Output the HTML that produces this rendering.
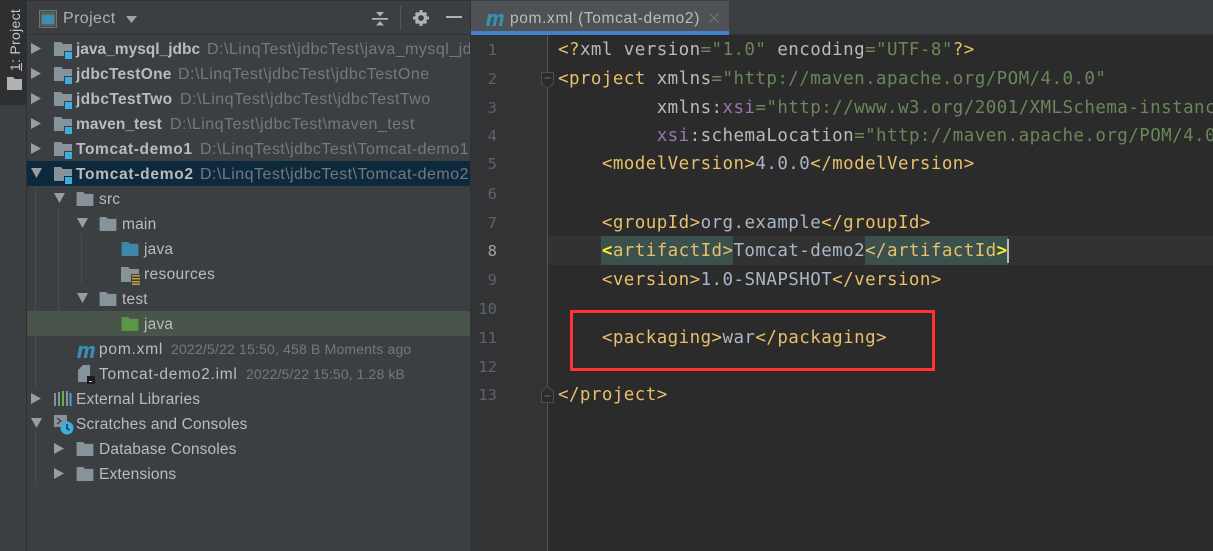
<!DOCTYPE html>
<html><head><meta charset="utf-8">
<style>
html,body{margin:0;padding:0;background:#2b2b2b}
#r{position:relative;width:1213px;height:551px;overflow:hidden;background:#2b2b2b;font-family:"Liberation Sans",sans-serif}
#r div,#r svg{position:absolute}
.t{font-size:15.5px;color:#bbb;white-space:nowrap;line-height:25px;height:25px;letter-spacing:.2px}
.b{font-weight:bold}
.p{color:#787878;font-size:16px;letter-spacing:.47px}
.d{color:#787878;font-size:14px}
.c{font-family:"DejaVu Sans Mono",monospace;font-size:17.5px;letter-spacing:.43px;white-space:pre;line-height:29px;height:29px;left:558px;color:#a9b7c6}
.n{font-family:"DejaVu Sans Mono",monospace;font-size:15.5px;color:#606366;text-align:right;width:40px;left:457px;line-height:29px;height:29px}
.g{color:#e8bf6a}.a{color:#bababa}.s{color:#6a8759}.x{color:#9876aa}.y{color:#ffef28;font-weight:bold}
</style></head><body>
<div id="r">
<svg width="0" height="0" style="position:absolute"><defs>
<symbol id="f" viewBox="0 0 18 15"><path d="M0 0h7l2 2h9v13H0z" fill="#87939a"/></symbol>
<symbol id="m" viewBox="0 0 20 16"><path d="M1 16 3.500 3h3.200l-.3 1.800C7.500 3.500 9 3 10.200 3c1.500 0 2.500.7 2.800 2 1.200-1.300 2.700-2 4-2 2.200 0 3.200 1.400 2.800 3.500L18 16h-3.400l1.700-8.700c.2-1-.2-1.500-1-1.500-.8 0-1.600.5-2.200 1.200L11.400 16H8l1.700-8.700c.2-1-.2-1.500-1-1.500-.8 0-1.600.5-2.200 1.200L4.500 16z" fill="#3a8fb7"/></symbol>
</defs></svg>

<!-- left strip -->
<div style="left:0;top:0;width:27px;height:551px;background:#3c3f41"></div>
<div style="left:0;top:0;width:26px;height:105px;background:#2d2f30"></div>
<div style="left:26px;top:0;width:1px;height:551px;background:#2d2f30"></div>
<div style="left:-25px;top:30px;width:80px;height:20px;line-height:20px;font-size:14px;color:#c4c4c4;transform:rotate(-90deg);text-align:center;white-space:nowrap;letter-spacing:.3px"><u>1</u>: Project</div>
<svg style="left:7px;top:77px" width="15" height="13" viewBox="0 0 15 13"><path d="M0 0h6l2 2h7v11H0z" fill="#afb1b3"/></svg>

<!-- project panel -->
<div style="left:27px;top:0;width:443px;height:551px;background:#3c3f41;overflow:hidden"></div>
<div style="left:27px;top:0;width:443px;height:1px;background:#323232"></div>
<div style="left:27px;top:34px;width:443px;height:1px;background:#323232"></div>
<svg style="left:39px;top:10px" width="18" height="18" viewBox="0 0 18 18"><rect x=".5" y=".5" width="17" height="17" fill="#3c3f41" stroke="#6e7375"/><rect x="1.500" y="1.500" width="15" height="15" fill="#5a6062"/><rect x="3" y="5" width="12" height="9" fill="#3f8db0"/></svg>
<div class="t" style="left:63px;top:6px;font-size:16px;color:#aeb0b2;letter-spacing:.4px">Project</div>
<svg style="left:126px;top:16px" width="11" height="7"><path d="M0 0h11L5.500 7z" fill="#a0a2a4"/></svg>
<svg style="left:372px;top:10px" width="16" height="17" viewBox="0 0 16 17"><path d="M0 8h16v1.800H0zM4 2h8L8 6.500zM8 11l4 4.500H4z" fill="#afb1b3"/></svg>
<div style="left:400px;top:6px;width:1px;height:24px;background:#515658"></div>
<svg style="left:413px;top:10px" width="16" height="16" viewBox="0 0 16 16"><circle cx="8" cy="8" r="4.500" fill="none" stroke="#afb1b3" stroke-width="3.200"/><path d="M6.500 0h3v3h-3zM6.500 13h3v3h-3zM0 6.500h3v3H0zM13 6.500h3v3h-3zM1.800 3.800l2-2 2 2-2 2zM10.200 3.800l2-2 2 2-2 2zM1.800 12.200l2-2 2 2-2 2zM10.200 12.200l2-2 2 2-2 2z" fill="#afb1b3"/></svg>
<div style="left:446px;top:16px;width:16px;height:2px;background:#afb1b3"></div>

<!-- row bg -->
<div style="left:27px;top:161px;width:443px;height:25px;background:#0d293e"></div>
<div style="left:27px;top:311px;width:443px;height:25px;background:#49544a"></div>

<!-- guides -->
<div style="left:35px;top:186px;width:1px;height:201px;background:#4a4d4f"></div>
<div style="left:58px;top:208px;width:1px;height:128px;background:#4a4d4f"></div>
<div style="left:81px;top:233px;width:1px;height:52px;background:#4a4d4f"></div>
<div style="left:81px;top:308px;width:1px;height:28px;background:#4a4d4f"></div>
<div style="left:35px;top:432px;width:1px;height:54px;background:#4a4d4f"></div>

<!-- arrows collapsed -->
<svg style="left:31px;top:43px" width="11" height="11"><path d="M0 0l10 5.500L0 11z" fill="#9a9c9e"/></svg>
<svg style="left:31px;top:68px" width="11" height="11"><path d="M0 0l10 5.500L0 11z" fill="#9a9c9e"/></svg>
<svg style="left:31px;top:93px" width="11" height="11"><path d="M0 0l10 5.500L0 11z" fill="#9a9c9e"/></svg>
<svg style="left:31px;top:118px" width="11" height="11"><path d="M0 0l10 5.500L0 11z" fill="#9a9c9e"/></svg>
<svg style="left:31px;top:143px" width="11" height="11"><path d="M0 0l10 5.500L0 11z" fill="#9a9c9e"/></svg>
<svg style="left:31px;top:393px" width="11" height="11"><path d="M0 0l10 5.500L0 11z" fill="#9a9c9e"/></svg>
<svg style="left:54px;top:443px" width="11" height="11"><path d="M0 0l10 5.500L0 11z" fill="#9a9c9e"/></svg>
<svg style="left:54px;top:468px" width="11" height="11"><path d="M0 0l10 5.500L0 11z" fill="#9a9c9e"/></svg>
<!-- arrows expanded -->
<svg style="left:31px;top:168px" width="12" height="10"><path d="M0 0h11L5.500 10z" fill="#9a9c9e"/></svg>
<svg style="left:54px;top:193px" width="12" height="10"><path d="M0 0h11L5.500 10z" fill="#9a9c9e"/></svg>
<svg style="left:77px;top:218px" width="12" height="10"><path d="M0 0h11L5.500 10z" fill="#9a9c9e"/></svg>
<svg style="left:77px;top:293px" width="12" height="10"><path d="M0 0h11L5.500 10z" fill="#9a9c9e"/></svg>
<svg style="left:31px;top:418px" width="12" height="10"><path d="M0 0h11L5.500 10z" fill="#9a9c9e"/></svg>

<!-- module folders -->
<svg style="left:54px;top:42px" width="20" height="18" viewBox="0 0 20 18"><path d="M0 0h7l2 2h9v12H0z" fill="#87939a"/><rect x="10.500" y="9.500" width="8" height="8" fill="#3caee0" stroke="#3c3f41"/></svg>
<svg style="left:54px;top:67px" width="20" height="18" viewBox="0 0 20 18"><path d="M0 0h7l2 2h9v12H0z" fill="#87939a"/><rect x="10.500" y="9.500" width="8" height="8" fill="#3caee0" stroke="#3c3f41"/></svg>
<svg style="left:54px;top:92px" width="20" height="18" viewBox="0 0 20 18"><path d="M0 0h7l2 2h9v12H0z" fill="#87939a"/><rect x="10.500" y="9.500" width="8" height="8" fill="#3caee0" stroke="#3c3f41"/></svg>
<svg style="left:54px;top:117px" width="20" height="18" viewBox="0 0 20 18"><path d="M0 0h7l2 2h9v12H0z" fill="#87939a"/><rect x="10.500" y="9.500" width="8" height="8" fill="#3caee0" stroke="#3c3f41"/></svg>
<svg style="left:54px;top:142px" width="20" height="18" viewBox="0 0 20 18"><path d="M0 0h7l2 2h9v12H0z" fill="#87939a"/><rect x="10.500" y="9.500" width="8" height="8" fill="#3caee0" stroke="#3c3f41"/></svg>
<svg style="left:54px;top:167px" width="20" height="18" viewBox="0 0 20 18"><path d="M0 0h7l2 2h9v12H0z" fill="#87939a"/><rect x="10.500" y="9.500" width="8" height="8" fill="#3caee0" stroke="#0d293e"/></svg>

<!-- plain folders -->
<svg style="left:76px;top:192px" width="18" height="14"><use href="#f"/></svg>
<svg style="left:99px;top:217px" width="18" height="14"><use href="#f"/></svg>
<svg style="left:99px;top:292px" width="18" height="14"><use href="#f"/></svg>
<svg style="left:121px;top:242px" width="18" height="14" viewBox="0 0 18 15"><path d="M0 0h7l2 2h9v13H0z" fill="#3f87a8"/></svg>
<svg style="left:121px;top:267px" width="20" height="18" viewBox="0 0 20 18"><path d="M0 0h7l2 2h9v13H0z" fill="#87939a"/><rect x="10" y="7" width="10" height="11" fill="#3c3f41"/><path d="M11 8h8v1.500h-8zM11 11h8v1.500h-8zM11 14h8v1.500h-8zM11 16.500h8V18h-8z" fill="#c79a3b"/></svg>
<svg style="left:121px;top:317px" width="18" height="14" viewBox="0 0 18 15"><path d="M0 0h7l2 2h9v13H0z" fill="#5a9647"/></svg>
<svg style="left:76px;top:442px" width="18" height="14"><use href="#f"/></svg>
<svg style="left:76px;top:467px" width="18" height="14"><use href="#f"/></svg>

<!-- file icons -->
<svg style="left:76px;top:343px" width="19" height="15"><use href="#m"/></svg>
<svg style="left:78px;top:365px" width="18" height="20" viewBox="0 0 18 20"><path d="M0 5l5-5h7v17H0z" fill="#87939a"/><rect x="9" y="11" width="8" height="8" fill="#1d1d1d"/><rect x="11" y="16" width="3" height="1" fill="#ccc"/></svg>
<svg style="left:54px;top:391px" width="18" height="16" viewBox="0 0 18 16"><path d="M0 2h2v13H0zM4 1h2v14H4zM12 0h2v15h-2z" fill="#87939a"/><path d="M8 0h2v15H8z" fill="#62b543"/><path d="M15.500 2h2v13h-2z" fill="#40a4d8"/></svg>
<svg style="left:54px;top:415px" width="20" height="20" viewBox="0 0 20 20"><path d="M0 0h13v12H0z" fill="#87939a"/><path d="M3 3l4 3-4 3" fill="none" stroke="#3c3f41" stroke-width="1.300"/><circle cx="13" cy="13" r="6.500" fill="#3caee0"/><path d="M13 9v4.500l2.500 1.500" fill="none" stroke="#223" stroke-width="1.400"/></svg>

<!-- tree labels -->
<div style="left:27px;top:37px;width:443px;height:450px;overflow:hidden">
<div class="t b" style="left:49px;top:0;letter-spacing:0">java_mysql_jdbc</div><div class="t p" style="left:180px;top:0">D:\LinqTest\jdbcTest\java_mysql_jdbc</div>
<div class="t b" style="left:49px;top:25px;letter-spacing:.27px">jdbcTestOne</div><div class="t p" style="left:151px;top:25px">D:\LinqTest\jdbcTest\jdbcTestOne</div>
<div class="t b" style="left:49px;top:50px;letter-spacing:.37px">jdbcTestTwo</div><div class="t p" style="left:153px;top:50px">D:\LinqTest\jdbcTest\jdbcTestTwo</div>
<div class="t b" style="left:49px;top:75px;letter-spacing:.05px">maven_test</div><div class="t p" style="left:143px;top:75px">D:\LinqTest\jdbcTest\maven_test</div>
<div class="t b" style="left:49px;top:100px;letter-spacing:.63px">Tomcat-demo1</div><div class="t p" style="left:173px;top:100px">D:\LinqTest\jdbcTest\Tomcat-demo1</div>
<div class="t b" style="left:49px;top:125px;letter-spacing:.72px">Tomcat-demo2</div><div class="t p" style="left:173px;top:125px">D:\LinqTest\jdbcTest\Tomcat-demo2</div>
<div class="t" style="left:72px;top:150px">src</div>
<div class="t" style="left:95px;top:175px">main</div>
<div class="t" style="left:117px;top:200px">java</div>
<div class="t" style="left:117px;top:225px;letter-spacing:.35px">resources</div>
<div class="t" style="left:95px;top:250px">test</div>
<div class="t" style="left:117px;top:275px">java</div>
<div class="t" style="left:72px;top:300px;letter-spacing:.8px">pom.xml</div><div class="t d" style="left:144px;top:300px;letter-spacing:.18px">2022/5/22 15:50, 458 B Moments ago</div>
<div class="t" style="left:72px;top:325px;letter-spacing:.75px">Tomcat-demo2.iml</div><div class="t d" style="left:219px;top:325px;letter-spacing:.1px">2022/5/22 15:50, 1.28 kB</div>
<div class="t" style="left:49px;top:350px;letter-spacing:.2px">External Libraries</div>
<div class="t" style="left:49px;top:375px;letter-spacing:.16px">Scratches and Consoles</div>
<div class="t" style="left:72px;top:400px;letter-spacing:.13px">Database Consoles</div>
<div class="t" style="left:72px;top:425px;letter-spacing:.15px">Extensions</div>
</div>

<!-- tab bar -->
<div style="left:470px;top:0;width:1px;height:551px;background:#323232"></div>
<div style="left:471px;top:0;width:742px;height:35px;background:#3c3f41"></div>
<div style="left:471px;top:1px;width:258px;height:30px;background:#4e5254"></div>
<div style="left:471px;top:31px;width:258px;height:4px;background:#4083c9"></div>
<div style="left:729px;top:34px;width:484px;height:1px;background:#323232"></div>
<svg style="left:485px;top:11px" width="19" height="15"><use href="#m"/></svg>
<div class="t" style="left:510px;top:6px;font-size:15.5px;color:#bbb;letter-spacing:.65px">pom.xml (Tomcat-demo2)</div>
<svg style="left:709px;top:13px" width="10" height="10"><path d="M.5.500l9 9M9.500.500l-9 9" stroke="#6f7375" stroke-width="1.200"/></svg>

<!-- gutter -->
<div style="left:471px;top:35px;width:76px;height:516px;background:#313335"></div>
<div style="left:547px;top:35px;width:1px;height:516px;background:#555"></div>
<div style="left:548px;top:236px;width:665px;height:29px;background:#323232"></div>
<div class="n" style="top:36px">1</div>
<div class="n" style="top:65px">2</div>
<div class="n" style="top:94px">3</div>
<div class="n" style="top:122px">4</div>
<div class="n" style="top:150px">5</div>
<div class="n" style="top:180px">6</div>
<div class="n" style="top:209px">7</div>
<div class="n" style="top:237px;color:#a4a3a3">8</div>
<div class="n" style="top:266px">9</div>
<div class="n" style="top:295px">10</div>
<div class="n" style="top:324px">11</div>
<div class="n" style="top:353px">12</div>
<div class="n" style="top:381px">13</div>
<svg style="left:541px;top:72px" width="13" height="17" viewBox="0 0 13 17"><path d="M.5.500h12v11l-6 5-6-5z" fill="#2b2b2b" stroke="#4c4f51"/><path d="M3.500 6h6" stroke="#6a6e70"/></svg>
<svg style="left:541px;top:386px" width="13" height="17" viewBox="0 0 13 17"><path d="M.5 16.500h12v-11l-6-5-6 5z" fill="#2b2b2b" stroke="#4c4f51"/><path d="M3.500 10h6" stroke="#6a6e70"/></svg>

<!-- highlights -->
<div style="left:601px;top:236px;width:132px;height:29px;background:#3b514d"></div>
<div style="left:865px;top:236px;width:143px;height:29px;background:#3b514d"></div>
<div style="left:1007px;top:239px;width:2px;height:24px;background:#bbb"></div>

<!-- code -->
<div class="c" style="top:36px"><span class="g">&lt;?</span><span class="a">xml version</span><span class="s">="1.0"</span> <span class="a">encoding</span><span class="s">="UTF-8"</span><span class="g">?&gt;</span></div>
<div class="c" style="top:65px"><span class="g">&lt;project</span> <span class="a">xmlns</span><span class="s">="http://maven.apache.org/POM/4.0.0"</span></div>
<div class="c" style="top:94px">         <span class="a">xmlns:</span><span class="x">xsi</span><span class="s">="http://www.w3.org/2001/XMLSchema-instance"</span></div>
<div class="c" style="top:122px">         <span class="x">xsi</span><span class="a">:schemaLocation</span><span class="s">="http://maven.apache.org/POM/4.0.0 http://maven.apache.org/xsd/maven-4.0.0.xsd"</span></div>
<div class="c" style="top:150px">    <span class="g">&lt;modelVersion&gt;</span>4.0.0<span class="g">&lt;/modelVersion&gt;</span></div>
<div class="c" style="top:209px">    <span class="g">&lt;groupId&gt;</span>org.example<span class="g">&lt;/groupId&gt;</span></div>
<div class="c" style="top:237px">    <span class="y">&lt;</span><span class="g">artifactId&gt;</span>Tomcat-demo2<span class="g">&lt;/artifactId</span><span class="y">&gt;</span></div>
<div class="c" style="top:266px">    <span class="g">&lt;version&gt;</span>1.0-SNAPSHOT<span class="g">&lt;/version&gt;</span></div>
<div class="c" style="top:324px">    <span class="g">&lt;packaging&gt;</span>war<span class="g">&lt;/packaging&gt;</span></div>
<div class="c" style="top:381px"><span class="g">&lt;/project&gt;</span></div>

<!-- red box -->
<div style="left:570px;top:310px;width:359px;height:55px;border:3px solid #ff3333"></div>
</div>
</body></html>
